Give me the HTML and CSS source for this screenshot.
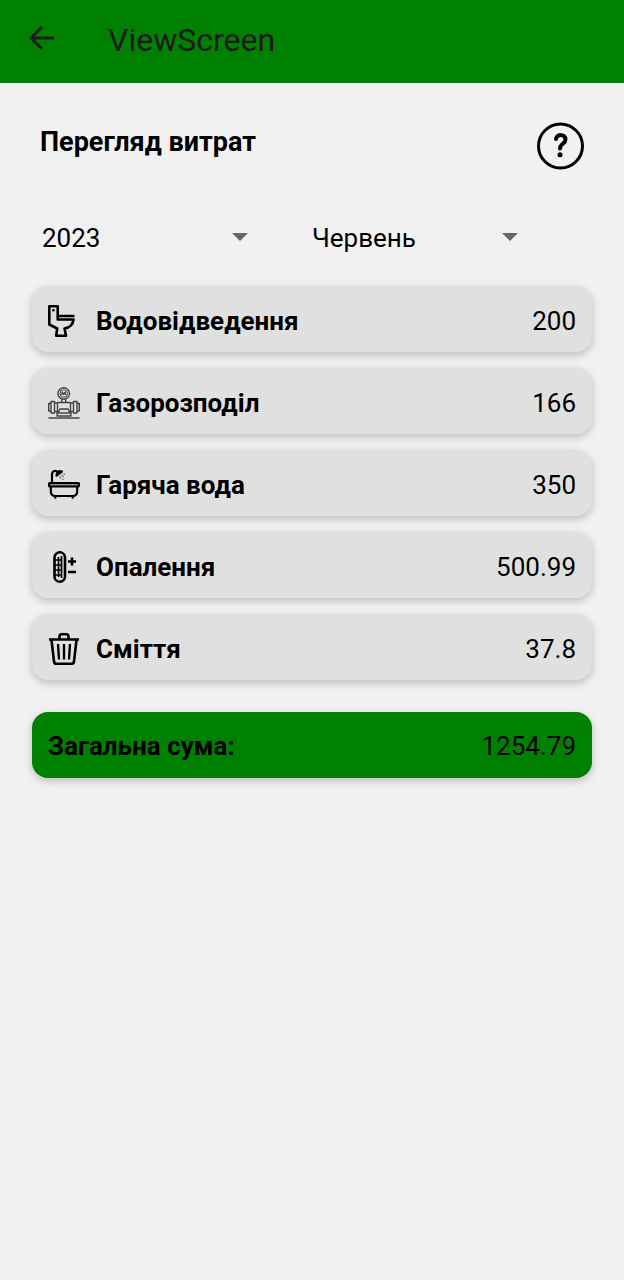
FILE: index.html
```html
<!DOCTYPE html>
<html lang="uk">
<head>
<meta charset="utf-8">
<meta name="viewport" content="width=device-width, initial-scale=1">
<title>ViewScreen</title>
<link rel="stylesheet" href="styles.css">
</head>
<body>
<header class="app-bar">
  <button class="icon-button back" type="button" aria-label="Назад">
    <svg width="26" height="26" viewBox="0 0 26 26" fill="none" stroke="currentColor" stroke-width="3"><path d="M26 13H3M14 2 3 13l11 11"/></svg>
  </button>
  <div class="app-title">ViewScreen</div>
</header>
<main class="content">
  <div class="heading-row">
    <h1 class="heading">Перегляд витрат</h1>
    <button class="icon-button help" type="button" aria-label="Довідка">
      <svg width="48" height="48" viewBox="0 0 48 48" fill="none" stroke="currentColor" stroke-linecap="round" stroke-linejoin="round"><circle cx="24.500" cy="24" r="22" stroke-width="3"/><path d="M20 17c1-5.500 9.500-5 9.500.500 0 4.500-5.500 4-5.500 9" stroke-width="4"/><circle cx="24" cy="32.700" r="2.500" fill="currentColor" stroke="none"/></svg>
    </button>
  </div>
  <div class="filters">
    <div class="picker">
      <select class="picker-select" aria-label="Рік"><option>2023</option></select>
    </div>
    <div class="picker">
      <select class="picker-select" aria-label="Місяць"><option>Червень</option></select>
    </div>
  </div>
  <ul class="expenses">
    <li class="card">
      <svg class="card-icon" viewBox="0 0 32 32" fill="none" stroke="currentColor" stroke-width="2.600" stroke-linejoin="round"><path d="M1.300 1.300h8.400v13.200h15.800C25 19.500 21.500 23 16.500 23.500L18 30.700H8.200l1-7.200L1.300 19.500zM9.700 11H26.500"/><circle cx="5.400" cy="5.200" r="1.300" fill="currentColor" stroke="none"/></svg>
      <span class="card-name">Водовідведення</span>
      <span class="card-value">200</span>
    </li>
    <li class="card">
      <svg class="card-icon gas" viewBox="0 0 32 32" fill="none" stroke="currentColor" stroke-width="1.400" stroke-linejoin="round"><circle cx="15.700" cy="6.500" r="5.800"/><circle cx="15.700" cy="6.500" r="3.800" stroke-width="1"/><path d="m13.800 8 .5-3 1.400 2.500L17.200 5l.5 3M13.700 12.300v3.200M17.700 12.300v3.200M9.500 15.500h13M.7 16.500H3v7.500H.7zM3 14.500h3.500v11.500H3zM6.500 16h3v8.500h-3zM22.500 16h3v8.500h-3zM25.500 14.500H29v11.500h-3.500zM29 16.500h2.300V24H29zM12 22h8l2 4H10zM9 26h14v3H9zM.5 31h31"/></svg>
      <span class="card-name">Газорозподіл</span>
      <span class="card-value">166</span>
    </li>
    <li class="card">
      <svg class="card-icon" viewBox="0 0 32 32" fill="none" stroke="currentColor" stroke-width="2.200" stroke-linejoin="round"><path d="M4 14V5.500C4 1.500 8 1 10 3M2.800 17.500v4.500c0 3 1.500 5 4.500 5h17.400c3 0 4.500-2 4.500-5v-4.500M8 27l-1.200 2.500M24 27l1.200 2.500"/><rect x="1" y="14" width="30" height="3.500" rx="1" fill="#888"/><path d="M8.500 6.500C8.500 3 11 1.500 14 2.500z" fill="currentColor"/><path d="m11.500 7.500 1.500 2M13.500 6l2 2M15.500 4.500 17 5.500M14.500 10l1 1" stroke="#777" stroke-width="1.300"/></svg>
      <span class="card-name">Гаряча вода</span>
      <span class="card-value">350</span>
    </li>
    <li class="card">
      <svg class="card-icon" viewBox="0 0 32 32" fill="none" stroke="currentColor" stroke-width="2.200"><rect x="6.500" y="1.300" width="10.500" height="29.400" rx="5.250" stroke-width="2.600"/><path d="M10.500 6v20M13.500 5v22M7 9h6M7 14h6M7 19h6M7 24h6" stroke-width="1.700"/><path d="M20 10.500h8M24 6.500v8M20 21h8" stroke-width="2.600"/></svg>
      <span class="card-name">Опалення</span>
      <span class="card-value">500.99</span>
    </li>
    <li class="card">
      <svg class="card-icon" viewBox="0 0 32 32" fill="none" stroke="currentColor" stroke-width="2.600" stroke-linejoin="round"><path d="M1 6.500h30M11.500 6V3.500c0-1.500 1-2.200 2-2.200h5c1 0 2 .7 2 2.200V6M3.500 7 6 28.500c.2 1.500 1 2.200 2.200 2.200h15.600c1.200 0 2-.7 2.200-2.200L28.500 7"/><path d="m10 11 1 15.500M16 11v15.500M22 11l-1 15.500" stroke-width="2.400"/></svg>
      <span class="card-name">Сміття</span>
      <span class="card-value">37.8</span>
    </li>
  </ul>
  <div class="card total">
    <span class="card-name">Загальна сума:</span>
    <span class="card-value">1254.79</span>
  </div>
</main>
</body>
</html>
```
FILE: styles.css
```css
* {
  box-sizing: border-box;
}

body {
  margin: 0;
  min-height: 100vh;
  background: #f1f1f1;
  color: #000;
  font-family: Roboto, "Noto Sans", sans-serif;
  font-size: 26px;
  line-height: 34px;
}

.app-bar {
  display: flex;
  align-items: flex-start;
  gap: 54px;
  padding: 16px 28px 18px;
  border-bottom: 1px solid #0a780a;
  background: #008000;
  color: #1c1c1e;
}

.app-title {
  font-size: 32px;
  line-height: 48px;
}

.icon-button {
  display: flex;
  padding: 0;
  border: 0;
  background: none;
  color: inherit;
}

.back {
  margin-top: 9px;
}

.content {
  padding: 39px 32px;
}

.heading-row {
  display: flex;
  justify-content: space-between;
  align-items: flex-start;
  padding: 0 8px;
}

.heading {
  margin: 3px 0 0;
  font-size: 27px;
  line-height: 34px;
  font-weight: 700;
}

.filters {
  display: grid;
  grid-template-columns: 1fr 1fr;
  gap: 46px;
  padding: 0 58px 0 8px;
  margin: 51px 0 31px;
}

.picker {
  position: relative;
}

.picker::after {
  content: "";
  position: absolute;
  top: 12px;
  right: 16px;
  width: 16px;
  height: 8px;
  background: #666;
  clip-path: polygon(0 0, 100% 0, 50% 100%);
  pointer-events: none;
}

.picker-select {
  display: block;
  width: 100%;
  padding: 0 40px 0 2px;
  border: 0;
  appearance: none;
  background: none;
  color: inherit;
  font: inherit;
}

.expenses {
  display: flex;
  flex-direction: column;
  gap: 16px;
  margin: 0 0 32px;
  padding: 0;
  list-style: none;
}

.card {
  display: flex;
  align-items: center;
  gap: 16px;
  padding: 18px 16px 14px;
  border-radius: 16px;
  background: #e0e0e0;
  box-shadow: 0 3px 8px rgba(0, 0, 0, 0.22);
}

.card-icon {
  flex: none;
  width: 32px;
  height: 32px;
}

.gas {
  color: #444;
}

.card-name {
  flex: 1;
  font-weight: 700;
}

.total {
  padding: 17px 16px 15px;
  background: #008000;
}
```
